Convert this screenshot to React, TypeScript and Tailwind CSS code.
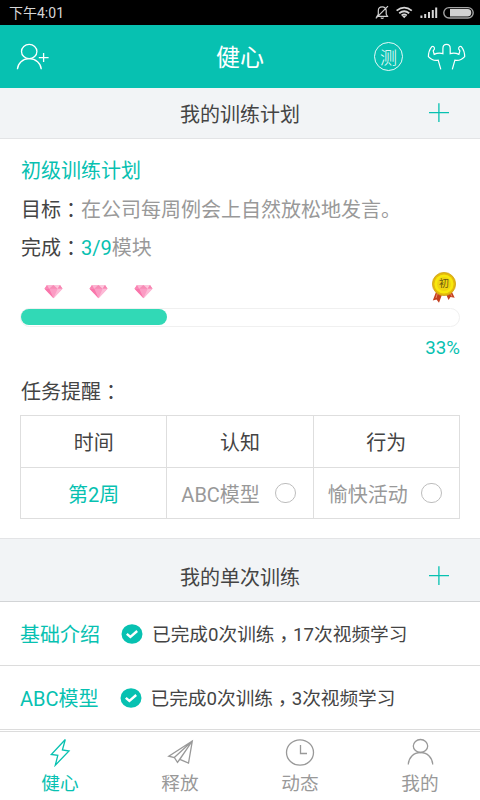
import { ReactNode } from "react";

const tableHead = ["时间", "认知", "行为"];

const trainings = [
  { name: "基础介绍", done: 0, videos: 17 },
  { name: "ABC模型", done: 0, videos: 3 },
];

// Traditional glyphs keep the full width punctuation centered in its box
function Colon() {
  return (
    <span lang="zh-TW" className="relative top-px font-['Noto_Sans_CJK_TC',sans-serif] leading-none">
      ：
    </span>
  );
}

function Comma() {
  return (
    <span lang="zh-TW" className="relative top-[5px] font-['Noto_Sans_CJK_TC',sans-serif] leading-none">
      ，
    </span>
  );
}

function StatusBar() {
  return (
    <div className="flex h-[25px] items-center justify-between bg-black pl-[9px] pr-[6px] text-[#d6d6d6]">
      <p className="pt-[2px] text-[14px] leading-[23px]">下午4:01</p>
      <svg width="100" height="25" viewBox="374 0 100 25" fill="none">
        <g stroke="#d0d0d0" strokeWidth="1.2">
          <path d="M377 16.4h10.5l-1.3-2.2v-3.4c0-2.3-1.6-3.9-4-3.9s-3.9 1.6-3.9 3.9v3.4zM380.8 17.6q1.4 1.4 2.8 0M388 6.2L375.8 18.4" />
        </g>
        <g stroke="#d6d6d6" strokeWidth="1.8">
          <path d="M396.6 10.6q7.6-5.8 15.2 0M399.2 13.2q5-3.9 10 0M401.6 15.4q2.6-1.9 5.2 0" />
        </g>
        <path d="M402.2 16l2 2.3 2-2.3q-2-1.2-4 0z" fill="#d6d6d6" />
        <path
          d="M421.4 15.6v2.4M425.2 14v4M429 12v6M432.8 10v8M436.2 7.4V18"
          stroke="#d6d6d6"
          strokeWidth="2"
        />
        <rect x="443.8" y="7.6" width="29.4" height="10.4" rx="5.2" stroke="#a5a5a5" strokeWidth="1.4" />
        <path d="M450 9.1h17.6a3.7 3.7 0 0 1 0 7.4H450z" fill="#d2d2d2" />
      </svg>
    </div>
  );
}

function Header() {
  return (
    <header className="grid h-[63px] grid-cols-[120px_1fr_120px] items-center bg-[#07c1b1] text-white">
      <svg className="ml-4" width="34" height="28" viewBox="16 43 34 28" fill="none" stroke="currentColor" strokeWidth="1.3">
        <ellipse cx="29.2" cy="51.5" rx="7.7" ry="7.2" />
        <path d="M17.4 69.3c.4-6 5.3-10.6 11.8-10.6s11.7 4.6 12.1 10.6M38.8 57.6h9.8M43.6 53v9" />
      </svg>
      <h1 className="pt-[3px] text-center text-[24px] leading-[60px]">健心</h1>
      <div className="flex items-center gap-[24px] pl-[14px]">
        <div className="flex size-[29px] shrink-0 items-center justify-center rounded-full border border-white/90">
          <span className="pt-[2px] text-[17px] font-light leading-[20px]">测</span>
        </div>
        <svg width="39" height="28" viewBox="427 43 39 28" fill="none" stroke="currentColor" strokeWidth="1.2">
          <path d="M440.8 69.4l-2.600-9.200c-3 .6-7-.6-9.800-3.600 0-3.400 1.200-7.200 3.200-9.800 1.800-1 3.200.4 2.800 2.200l-1.200 1.800 1 3.600c3-1.500 5.800-1.600 8.700-.8v-5.200c0-5.400 7.300-5.400 7.300 0v5.200c2.900-.8 5.700-.7 8.700.8l1-3.600-1.200-1.800c-.4-1.800 1-3.200 2.800-2.200 2 2.600 3.200 6.400 3.200 9.800-2.800 3-6.800 4.200-9.800 3.600l-2.600 9.200" />
        </svg>
      </div>
    </header>
  );
}

function SectionTitle({ className, children }: { className: string; children: ReactNode }) {
  return (
    <div className={`grid grid-cols-[60px_1fr_60px] items-center bg-[#f2f4f6] text-center ${className}`}>
      <h2 className="col-start-2 pt-[3px] leading-[30px]">{children}</h2>
      <svg width="20" height="20" viewBox="0 0 20 20" className="-mt-px ml-[9px]" stroke="#07c1b1" strokeWidth="1.3">
        <path d="M0 9.600h20M9.900 .3v18.800" />
      </svg>
    </div>
  );
}

function Diamond() {
  return (
    <svg width="19" height="15" viewBox="0 0 19 15">
      <path d="M3 1h13l2.500 3.800L9.500 14.200.5 4.800z" fill="#fb9cc4" />
      <path d="M.5 4.800h4.800l4.200 9.400z" fill="#f976ab" />
      <path d="M3 1L.5 4.800h4.800z" fill="#fa84b3" />
      <path d="M3 1h6.500L5.300 4.800z" fill="#fcb5d2" />
      <path d="M9.500 1l4.200 3.800H5.300z" fill="#f78cb6" />
      <path d="M9.500 1H16l-2.300 3.800z" fill="#fdc6dc" />
      <path d="M16 1l2.500 3.800h-4.800z" fill="#f785b1" />
      <path d="M13.700 4.800h4.800l-9 9.400z" fill="#fcbad6" />
    </svg>
  );
}

function Medal() {
  return (
    <div className="relative mt-[2px] h-[32px] w-[26px]">
      <svg width="26" height="32" viewBox="0 0 26 32">
        <path d="M5 20l-3.200 8.500 3.700-1 2.500 3.300 3.500-9.600z" fill="#c4401f" />
        <path d="M15 22l2.500 6 2-3 4.200.8L20 18z" fill="#c4401f" />
        <path d="M6.500 21l-1.500 5M19 20l1.800 4.500" stroke="#e98b67" />
        <circle cx="13" cy="12" r="11.600" fill="#e4b90d" stroke="#d0a314" strokeWidth=".8" />
        <circle cx="13" cy="12" r="9.600" fill="#f8e80c" />
        <circle cx="13" cy="12" r="7" fill="#efd311" />
      </svg>
      <span className="absolute left-0 top-[6px] w-full text-center text-[10px] leading-[12px] text-[#6b5a10]">初</span>
    </div>
  );
}

function TaskCell({ name }: { name: string }) {
  return (
    <td className="border border-[#dedede] p-0 text-[#999]">
      <div className="flex items-center justify-between pl-[14px] pr-[17px]">
        <span className="pt-[3px] leading-[30px]">{name}</span>
        <span className="h-5 w-[21px] rounded-full border border-[#bdbdbd]" />
      </div>
    </td>
  );
}

function Plan() {
  return (
    <section className="h-[399px] px-5 pt-[13px]">
      <div className="pl-px">
        <p className="h-[39px] leading-[39px] text-[#07c1b1]">初级训练计划</p>
        <p className="h-[38px] leading-[38px]">
          目标
          <Colon />
          <span className="text-[#999]">在公司每周例会上自然放松地发言。</span>
        </p>
        <p className="h-[38px] leading-[38px]">
          完成
          <Colon />
          <span className="text-[#07c1b1]">3/9</span>
          <span className="text-[#999]">模块</span>
        </p>
      </div>

      <div className="mt-[3px] flex h-[34px] items-start justify-between pl-6 pr-[3px]">
        <div className="flex gap-[26px] pt-[14px]">
          <Diamond />
          <Diamond />
          <Diamond />
        </div>
        <Medal />
      </div>
      <div className="mt-[4px] h-[19px] rounded-full border border-[#f0f0f0] bg-white">
        <div className="h-[16px] w-1/3 rounded-full bg-[#31d9b6]" />
      </div>
      <p className="mt-[6px] text-right text-[18.67px] leading-[30px] text-[#07c1b1]">33%</p>

      <p className="mt-[14px] pl-px leading-[30px]">
        任务提醒
        <Colon />
      </p>

      <table className="mt-[8px] w-full table-fixed border-collapse text-center">
        <thead>
          <tr className="h-[52px]">
            {tableHead.map((title) => (
              <th key={title} className="border border-[#dedede] p-0 pt-[3px] font-normal leading-[30px]">
                {title}
              </th>
            ))}
          </tr>
        </thead>
        <tbody>
          <tr className="h-[51px]">
            <td className="border border-[#dedede] p-0 pt-[3px] leading-[30px] text-[#07c1b1]">第2周</td>
            <TaskCell name="ABC模型" />
            <TaskCell name="愉快活动" />
          </tr>
        </tbody>
      </table>
    </section>
  );
}

function TrainingList() {
  return (
    <ul>
      {trainings.map(({ name, done, videos }) => (
        <li key={name} className="flex h-16 items-center border-b border-[#dcdcdc] pl-5">
          <span className="pt-[3px] leading-[30px] text-[#07c1b1]">{name}</span>
          <svg className="ml-[21px] mr-[9px]" width="22" height="20" viewBox="0 0 22 20">
            <ellipse cx="11" cy="10" rx="10.500" ry="9.800" fill="#07c1b1" />
            <path d="M5.800 9.800l3.600 3.200 6.800-6" fill="none" stroke="#fff" strokeWidth="2.400" />
          </svg>
          <span className="pt-[3px] text-[18.67px] leading-[30px]">
            已完成{done}次训练
            <Comma />
            {videos}次视频学习
          </span>
        </li>
      ))}
    </ul>
  );
}

function NavItem({ label, active, children }: { label: string; active?: boolean; children: ReactNode }) {
  return (
    <div className={active ? "flex flex-col items-center text-[#07c1b1]" : "flex flex-col items-center text-[#999]"}>
      <svg width="32" height="30" viewBox="0 0 32 30" fill="none" stroke="currentColor" strokeWidth="1.3">
        {children}
      </svg>
      <span className="mt-[4px] text-[18.67px] leading-[26px]">{label}</span>
    </div>
  );
}

function NavBar() {
  return (
    <nav className="grid h-[69px] grid-cols-4 border-t border-[#dcdcdc] bg-white pt-[5px]">
      <NavItem label="健心" active>
        <path d="M21.300 2.500L7.300 17.500l6.500.8L11.300 28.200 25 14l-6.600-1z" />
      </NavItem>
      <NavItem label="释放">
        <path d="M28.300 4L4.800 19.200l5.500 1.300 3.200 4.800 2.300-3 8.700 3.700zM28.300 4l-18 16.500M28.300 4L13.500 25.300M28.300 4L15.800 22.300" />
      </NavItem>
      <NavItem label="动态">
        <ellipse cx="16" cy="15.500" rx="13.500" ry="12.700" />
        <path d="M16.500 8v8.500h6.500" />
      </NavItem>
      <NavItem label="我的">
        <ellipse cx="16.500" cy="9" rx="7.200" ry="6.500" />
        <path d="M4.300 27.500c.3-6.800 5.200-12 12.200-12s11.900 5.200 12.200 12" />
      </NavItem>
    </nav>
  );
}

export default function App() {
  return (
    <div
      lang="zh-CN"
      className="flex h-[800px] w-[480px] flex-col overflow-hidden bg-white font-[Roboto,'Noto_Sans_CJK_SC',sans-serif] text-[20px] text-[#444]"
    >
      <StatusBar />
      <Header />
      <SectionTitle className="h-[51px] border-b border-[#e3e4e6]">我的训练计划</SectionTitle>
      <Plan />
      <SectionTitle className="h-[64px] border-y border-t-[#e3e4e6] border-b-[#d2d4d6] pt-[12px]">
        我的单次训练
      </SectionTitle>
      <TrainingList />
      <div className="flex-1" />
      <NavBar />
    </div>
  );
}
